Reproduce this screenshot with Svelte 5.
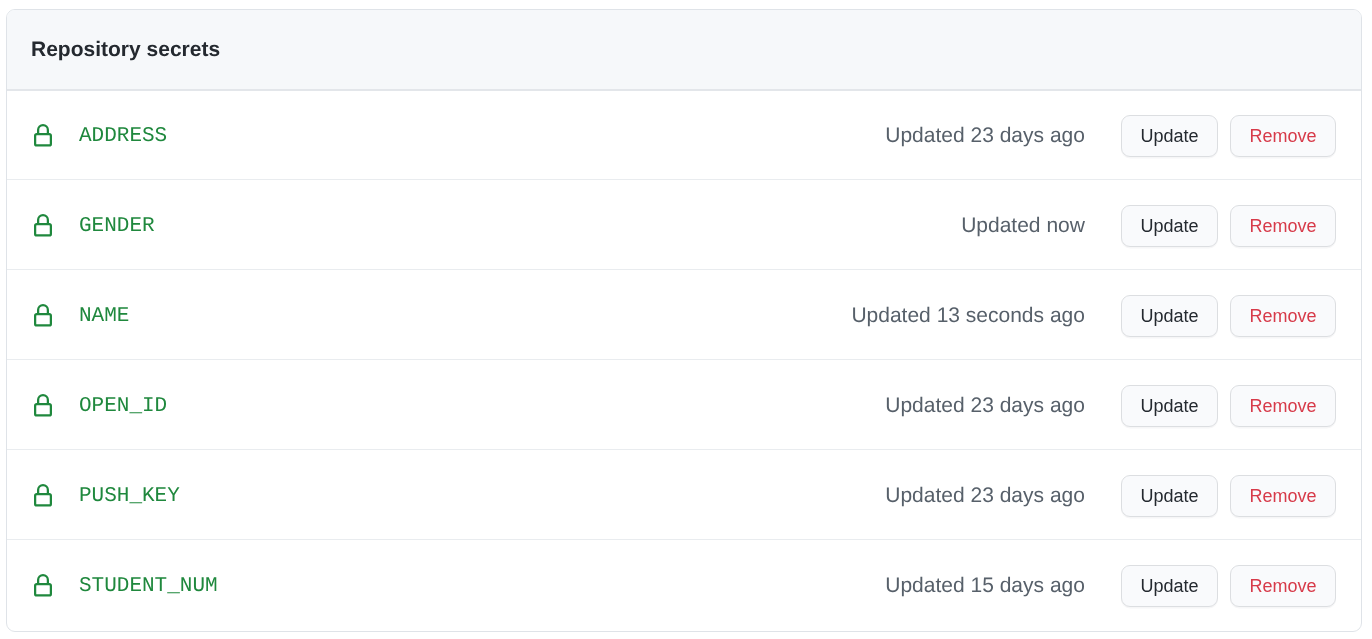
<script>
  const secrets = [
    { name: 'ADDRESS', updated: 'Updated 23 days ago' },
    { name: 'GENDER', updated: 'Updated now' },
    { name: 'NAME', updated: 'Updated 13 seconds ago' },
    { name: 'OPEN_ID', updated: 'Updated 23 days ago' },
    { name: 'PUSH_KEY', updated: 'Updated 23 days ago' },
    { name: 'STUDENT_NUM', updated: 'Updated 15 days ago' }
  ];
</script>

<div class="page">
  <section class="box">
    <header class="head"><h2>Repository secrets</h2></header>
    {#each secrets as s}
      <div class="row">
        <svg class="lock" viewBox="0 0 16 16" width="24" height="24" aria-hidden="true">
          <path fill="currentColor" d="M4 4a4 4 0 0 1 8 0v2h.25c.966 0 1.75.784 1.75 1.75v5.5A1.75 1.75 0 0 1 12.25 15h-8.5A1.75 1.75 0 0 1 2 13.25v-5.5C2 6.784 2.784 6 3.75 6H4Zm8.25 3.5h-8.5a.25.25 0 0 0-.25.25v5.5c0 .138.112.25.25.25h8.5a.25.25 0 0 0 .25-.25v-5.5a.25.25 0 0 0-.25-.25ZM10.5 6V4a2.5 2.5 0 1 0-5 0v2Z" />
        </svg>
        <code class="name">{s.name}</code>
        <span class="updated">{s.updated}</span>
        <button class="btn">Update</button>
        <button class="btn danger">Remove</button>
      </div>
    {/each}
  </section>
</div>

<style>
  :global(body) {
    margin: 0;
    background: #fff;
    font-family: "Liberation Sans", Arial, sans-serif;
    text-rendering: geometricPrecision;
  }
  .page {
    padding: 9px 10px 7px 6px;
    will-change: transform;
  }
  .box {
    border: 1px solid #dfe3e8;
    border-radius: 9px;
    overflow: hidden;
  }
  .head {
    box-sizing: border-box;
    height: 81px;
    padding: 0 24px;
    display: flex;
    align-items: center;
    background: #f6f8fa;
    border-bottom: 2px solid #e3e6ea;
  }
  h2 {
    margin: 0;
    font-size: 21px;
    font-weight: 700;
    color: #24292f;
  }
  .row {
    padding: 25px 25px 22px 24px;
    display: flex;
    align-items: center;
    border-top: 1px solid #e9ecef;
  }
  .head + .row {
    border-top: 0;
    padding-top: 24px;
  }
  .row:last-child {
    padding-bottom: 24px;
  }
  .lock {
    color: #1f883d;
    flex: none;
  }
  .name {
    margin-left: 24px;
    flex: 1;
    font-family: "Liberation Mono", monospace;
    font-size: 21px;
    color: #1f883d;
  }
  .updated {
    margin-right: 36px;
    font-size: 21px;
    color: #57606a;
  }
  .btn {
    box-sizing: border-box;
    height: 42px;
    padding: 0 18.5px;
    border: 1.5px solid #dcdee1;
    border-radius: 9px;
    background: #f9fafc;
    box-shadow: 0 1.5px 0 rgba(31, 35, 40, 0.04);
    font-family: inherit;
    font-size: 18px;
    color: #24292f;
  }
  .danger {
    margin-left: 12px;
    color: #d73a49;
  }
</style>
